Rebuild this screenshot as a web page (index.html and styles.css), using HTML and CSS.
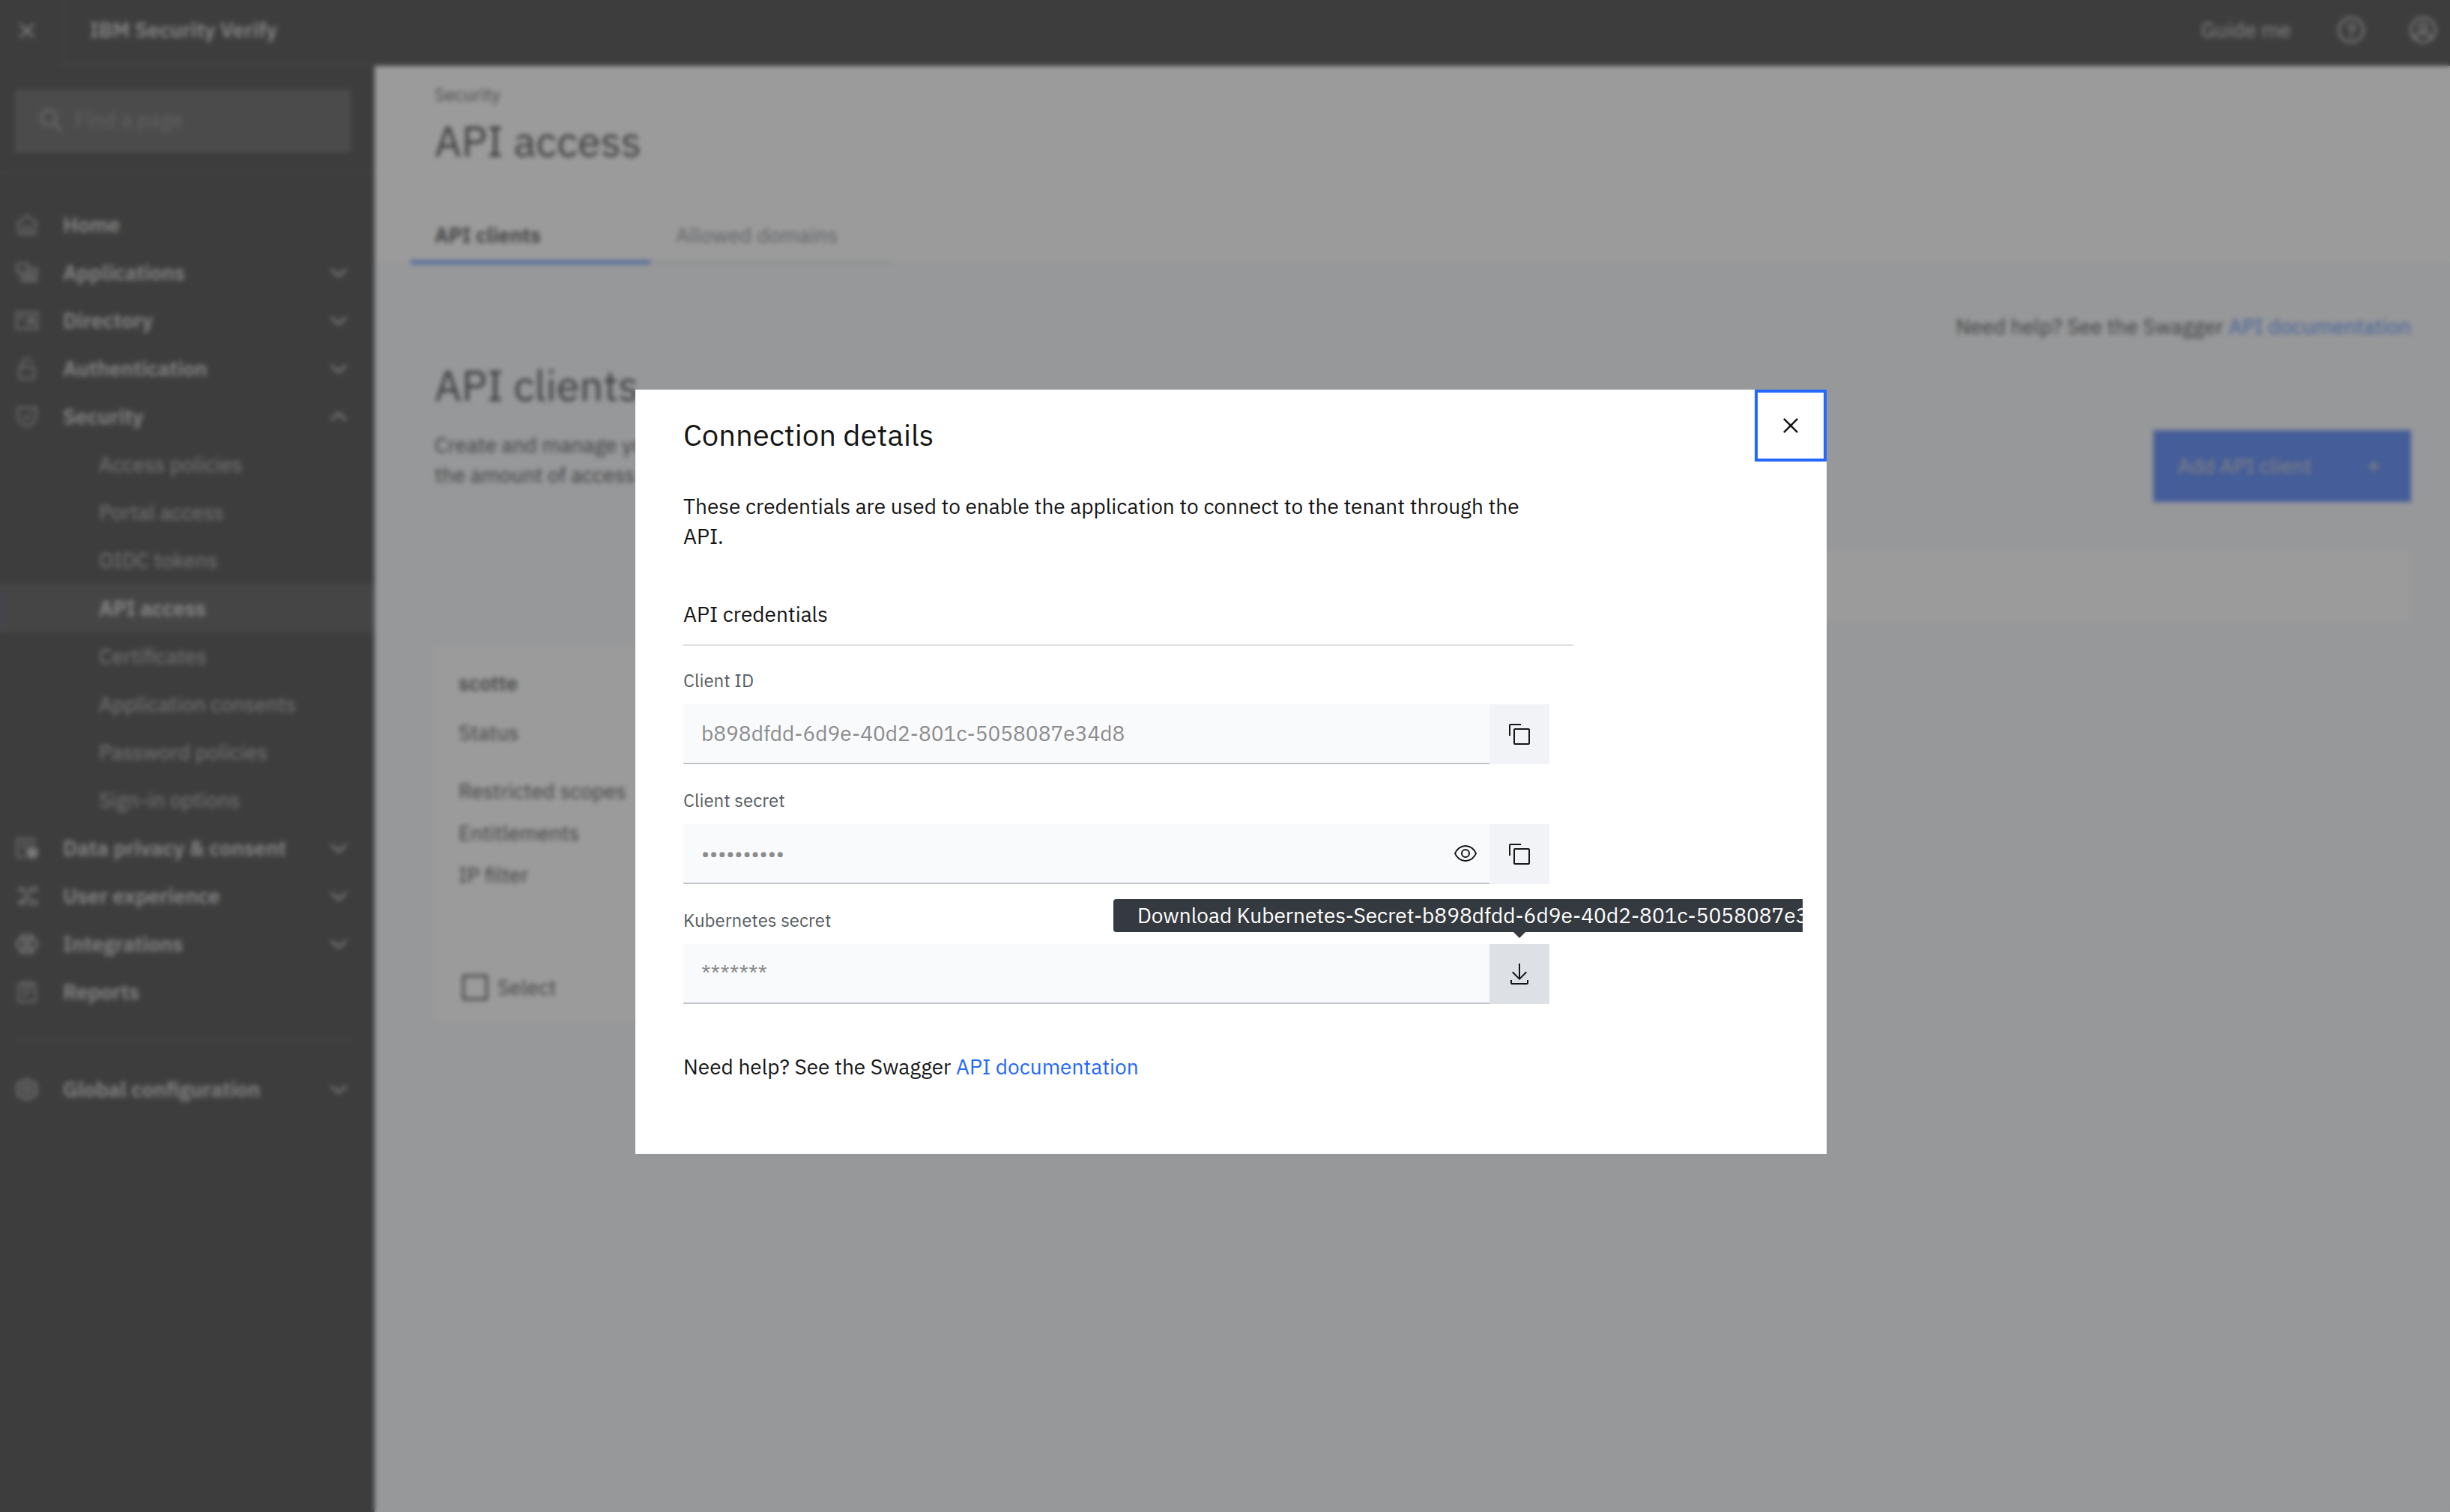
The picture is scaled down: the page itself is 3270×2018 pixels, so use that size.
FILE: index.html
```html
<!DOCTYPE html>
<html lang="en">
<head>
<meta charset="utf-8">
<meta name="viewport" content="width=device-width, initial-scale=1">
<title>API access - IBM Security Verify</title>
<link rel="stylesheet" href="styles.css">
</head>
<body>
<svg class="sprite" aria-hidden="true">
  <symbol id="close" viewBox="0 0 32 32"><path fill="currentColor" d="M17.414 16 24 9.414 22.586 8 16 14.586 9.414 8 8 9.414 14.586 16 8 22.586 9.414 24 16 17.414 22.586 24 24 22.586z"/></symbol>
  <symbol id="chevron" viewBox="0 0 32 32"><path fill="none" stroke="currentColor" stroke-width="2.500" d="M6 11.500 16 20.500 26 11.500"/></symbol>
  <symbol id="copy" viewBox="0 0 32 32"><path fill="currentColor" d="M28 10v18H10V10h18m0-2H10a2 2 0 0 0-2 2v18a2 2 0 0 0 2 2h18a2 2 0 0 0 2-2V10a2 2 0 0 0-2-2zM4 18H2V4a2 2 0 0 1 2-2h14v2H4z"/></symbol>
</svg>

<div class="shell">
  <header class="topbar">
    <button class="topbar-menu" aria-label="Close menu"><svg class="icon icon-large"><use href="#close"/></svg></button>
    <div class="topbar-main">
      <a class="brand" href="#">IBM <b>Security Verify</b></a>
      <nav class="topbar-actions" aria-label="Account">
        <a class="guide" href="#">Guide me</a>
        <button class="icon-button" aria-label="Help"><svg class="icon icon-large" viewBox="0 0 32 32" fill="none" stroke="currentColor" stroke-width="2"><circle cx="16" cy="16" r="13"/><path d="M12.500 13.500v-.5a2.500 2.500 0 0 1 2.500-2.500h2a3 3 0 0 1 0 6h-1v3"/><circle cx="16" cy="22.500" r=".6"/></svg></button>
        <button class="icon-button" aria-label="Profile"><svg class="icon icon-large" viewBox="0 0 32 32" fill="none" stroke="currentColor" stroke-width="2"><circle cx="16" cy="16" r="13"/><circle cx="16" cy="13" r="4"/><path d="M8 26v-2a4 4 0 0 1 4-4h8a4 4 0 0 1 4 4v2"/></svg></button>
      </nav>
    </div>
  </header>

  <aside class="sidebar">
    <div class="search">
      <svg class="icon" viewBox="0 0 32 32" fill="none" stroke="currentColor" stroke-width="2.500"><circle cx="13" cy="13" r="10"/><path d="m20 20 10 10"/></svg>
      <input type="search" aria-label="Find a page" placeholder="Find a page">
    </div>
    <nav class="nav" aria-label="Main">
      <a class="nav-item" href="#"><svg class="icon" viewBox="0 0 32 32" fill="none" stroke="currentColor" stroke-width="2"><path d="M2 15 16 4l14 11M5 13v15h22V13M12 28v-9h8v9"/></svg><span>Home</span></a>
      <button class="nav-item"><svg class="icon" viewBox="0 0 32 32" fill="none" stroke="currentColor" stroke-width="2"><path d="M3 4h14v12H3zM9 16v11h20V10H17M17 16h12M12 20h14M12 24h14"/></svg><span>Applications</span><svg class="chevron"><use href="#chevron"/></svg></button>
      <button class="nav-item"><svg class="icon" viewBox="0 0 32 32" fill="none" stroke="currentColor" stroke-width="2"><path d="M2 5h28v22H2zM6 10h7M6 14h4"/><circle cx="21" cy="13" r="3"/><path d="M16 23v-2a3 3 0 0 1 3-3h4a3 3 0 0 1 3 3v2"/></svg><span>Directory</span><svg class="chevron"><use href="#chevron"/></svg></button>
      <button class="nav-item"><svg class="icon" viewBox="0 0 32 32" fill="none" stroke="currentColor" stroke-width="2"><rect x="6" y="14" width="20" height="15" rx="1"/><path d="M10 14V9a6 6 0 0 1 12-1"/></svg><span>Authentication</span><svg class="chevron"><use href="#chevron"/></svg></button>
      <button class="nav-item" aria-expanded="true"><svg class="icon" viewBox="0 0 32 32" fill="none" stroke="currentColor" stroke-width="2"><path d="M4 4h24v12c0 6-4 9-12 13C8 25 4 22 4 16zM11 15l4 4 7-7"/></svg><span>Security</span><svg class="chevron chevron-up"><use href="#chevron"/></svg></button>
      <a class="nav-sub" href="#">Access policies</a>
      <a class="nav-sub" href="#">Portal access</a>
      <a class="nav-sub" href="#">OIDC tokens</a>
      <a class="nav-sub nav-sub-current" href="#" aria-current="page">API access</a>
      <a class="nav-sub" href="#">Certificates</a>
      <a class="nav-sub" href="#">Application consents</a>
      <a class="nav-sub" href="#">Password policies</a>
      <a class="nav-sub" href="#">Sign-in options</a>
      <button class="nav-item"><svg class="icon" viewBox="0 0 32 32" fill="none" stroke="currentColor" stroke-width="2"><path d="M25 12V4H3v24h11M8 10h12M8 15h6"/><circle cx="23" cy="22" r="7" fill="currentColor"/></svg><span>Data privacy &amp; consent</span><svg class="chevron"><use href="#chevron"/></svg></button>
      <button class="nav-item"><svg class="icon" viewBox="0 0 32 32" fill="none" stroke="currentColor" stroke-width="2"><path d="M3 7h8M11 23 21 9M3 24h8"/><circle cx="10" cy="7" r="2"/><circle cx="10" cy="24" r="3"/><path d="M20 5h9v4h-9zM20 22h9v5h-9zM11 9l10 14"/></svg><span>User experience</span><svg class="chevron"><use href="#chevron"/></svg></button>
      <button class="nav-item"><svg class="icon" viewBox="0 0 32 32" fill="none" stroke="currentColor" stroke-width="3"><path d="M9 5h14l7 11-7 11H9L2 16z"/><circle cx="16" cy="16" r="4"/><path d="M9 6l5 7M23 6l-5 7M9 26l5-7M23 26l-5-7"/></svg><span>Integrations</span><svg class="chevron"><use href="#chevron"/></svg></button>
      <a class="nav-item" href="#"><svg class="icon" viewBox="0 0 32 32" fill="none" stroke="currentColor" stroke-width="2"><path d="M11 5H5v24h22V5h-6M11 3h10v6H11zM10 15h12M10 20h7"/></svg><span>Reports</span></a>
    </nav>
    <nav class="nav nav-global" aria-label="Configuration">
      <button class="nav-item"><svg class="icon" viewBox="0 0 32 32" fill="none" stroke="currentColor" stroke-width="3"><path d="M16 3 28 9v14l-12 6-12-6V9z"/><circle cx="16" cy="16" r="5"/></svg><span>Global configuration</span><svg class="chevron"><use href="#chevron"/></svg></button>
    </nav>
  </aside>

  <main class="main">
    <div class="page-head">
      <div class="breadcrumb">Security</div>
      <h1 class="heading">API access</h1>
      <div class="tabs" role="tablist">
        <button class="tab tab-current" role="tab" aria-selected="true">API clients</button>
        <button class="tab" role="tab" aria-selected="false">Allowed domains</button>
      </div>
    </div>
    <div class="page-body">
      <p class="help">Need help? See the Swagger <a class="link" href="#">API documentation</a></p>
      <h2 class="heading section-heading">API clients</h2>
      <div class="intro">
        <p class="intro-text">Create and manage your API clients, including<br>the amount of access each client has.</p>
        <button class="add">Add API client<svg class="icon" viewBox="0 0 32 32" fill="none" stroke="currentColor" stroke-width="2.500"><path d="M16 8v16M8 16h16"/></svg></button>
      </div>
      <div class="toolbar"></div>
      <article class="card">
        <div class="card-body">
          <h3 class="card-title">scotte</h3>
          <p class="card-status">Status</p>
          <ul class="card-list">
            <li>Restricted scopes</li>
            <li>Entitlements</li>
            <li>IP filter</li>
          </ul>
        </div>
        <label class="card-select"><input class="checkbox" type="checkbox">Select</label>
      </article>
    </div>
  </main>
</div>

<div class="overlay">
  <section class="modal" role="dialog" aria-modal="true" aria-labelledby="modal-title">
    <button class="modal-close" aria-label="Close"><svg class="icon icon-large"><use href="#close"/></svg></button>
    <div class="modal-content">
      <h2 class="modal-title" id="modal-title">Connection details</h2>
      <p class="modal-text">These credentials are used to enable the application to connect to the tenant through the API.</p>
      <h3 class="modal-subtitle">API credentials</h3>
      <div class="field">
        <label class="field-label" for="client-id">Client ID</label>
        <div class="field-row">
          <div class="field-box"><input class="field-input" id="client-id" type="text" value="b898dfdd-6d9e-40d2-801c-5058087e34d8" readonly></div>
          <button class="field-action" aria-label="Copy client ID"><svg class="icon"><use href="#copy"/></svg></button>
        </div>
      </div>
      <div class="field">
        <label class="field-label" for="client-secret">Client secret</label>
        <div class="field-row">
          <div class="field-box"><input class="field-input" id="client-secret" type="password" value="0123456789" readonly>
            <button class="reveal" aria-label="Show client secret"><svg class="icon" viewBox="0 0 32 32" fill="currentColor"><path d="M30.940 15.660A16.690 16.690 0 0 0 16 5 16.690 16.690 0 0 0 1.060 15.660a1 1 0 0 0 0 .68A16.690 16.690 0 0 0 16 27a16.690 16.690 0 0 0 14.940-10.660 1 1 0 0 0 0-.68zM16 25c-5.300 0-10.900-3.930-12.930-9C5.100 10.930 10.700 7 16 7s10.900 3.930 12.930 9C26.900 21.070 21.300 25 16 25zM16 10a6 6 0 1 0 6 6 6 6 0 0 0-6-6zm0 10a4 4 0 1 1 4-4 4 4 0 0 1-4 4z"/></svg></button>
          </div>
          <button class="field-action" aria-label="Copy client secret"><svg class="icon"><use href="#copy"/></svg></button>
        </div>
      </div>
      <div class="field">
        <label class="field-label" for="kube-secret">Kubernetes secret</label>
        <div class="field-row">
          <div class="field-box"><input class="field-input" id="kube-secret" type="text" value="*******" readonly></div>
          <button class="field-action field-action-active" aria-describedby="download-tip" aria-label="Download"><svg class="icon" viewBox="0 0 32 32" fill="currentColor"><path d="M26 24v4H6v-4H4v4a2 2 0 0 0 2 2h20a2 2 0 0 0 2-2v-4zM26 14l-1.410-1.410L17 20.170V2h-2v18.170l-7.590-7.580L6 14l10 10z"/></svg><span class="tooltip" id="download-tip" role="tooltip">Download Kubernetes-Secret-b898dfdd-6d9e-40d2-801c-5058087e34d8.yaml</span></button>
        </div>
      </div>
      <p class="modal-help">Need help? See the Swagger <a class="link" href="#">API documentation</a></p>
    </div>
  </section>
</div>
</body>
</html>
```
FILE: styles.css
```css
* {
  box-sizing: border-box;
}

body {
  margin: 0;
  font-family: "IBM Plex Sans", "Noto Sans", sans-serif;
  font-size: 28px;
  line-height: 40px;
  color: #161616;
  background: #f4f7fb;
}

h1, h2, h3, p, ul {
  margin: 0;
  padding: 0;
  font-weight: 400;
}

ul {
  list-style: none;
}

button, input {
  margin: 0;
  padding: 0;
  border: 0;
  border-radius: 0;
  background: none;
  font: inherit;
  color: inherit;
}

a {
  color: inherit;
  text-decoration: none;
}

.link {
  color: #2468ff;
}

.sprite {
  position: absolute;
  width: 0;
  height: 0;
}

.icon {
  flex: none;
  display: block;
  width: 32px;
  height: 32px;
}

.icon-large {
  width: 40px;
  height: 40px;
}

/* Shell */

.shell {
  display: grid;
  grid-template: 88px 1fr / 500px 1fr;
  min-height: 100vh;
}

.topbar {
  grid-column: 1 / -1;
  display: flex;
  background: #161616;
  color: #c6c6c6;
}

.topbar-menu {
  width: 84px;
  padding: 0 0 6px 16px;
}

.topbar-main {
  flex: 1;
  display: flex;
  align-items: center;
  justify-content: space-between;
  padding: 0 16px 6px 34px;
  border-left: 2px solid #262626;
  border-bottom: 2px solid #262626;
}

.brand,
.brand b {
  font-weight: 600;
}

.topbar-actions {
  display: flex;
  align-items: center;
}

.guide {
  margin-right: 60px;
}

.icon-button + .icon-button {
  margin-left: 56px;
}

/* Sidebar */

.sidebar {
  padding-top: 32px;
  background: #161616;
  color: #c6c6c6;
}

.search {
  display: flex;
  align-items: center;
  gap: 16px;
  height: 82px;
  margin: 0 32px 28px 20px;
  padding-left: 32px;
  background: #393939;
  border-bottom: 2px solid #525252;
  color: #8d8d8d;
}

.search input {
  flex: 1;
  min-width: 0;
}

.search input::placeholder {
  color: #6f6f6f;
  opacity: 1;
}

.nav {
  display: flex;
  flex-direction: column;
  padding-top: 36px;
  border-top: 2px solid #262626;
}

.nav-item {
  display: flex;
  align-items: center;
  gap: 32px;
  height: 64px;
  padding: 0 32px 0 20px;
  font-weight: 600;
  text-align: left;
}

.nav-item span {
  flex: 1;
}

.nav-item .icon {
  color: #a8a8a8;
}

.chevron {
  width: 32px;
  height: 32px;
}

.chevron-up {
  transform: rotate(180deg);
}

.nav-sub {
  height: 64px;
  padding-left: 132px;
  line-height: 64px;
  color: #a8a8a8;
}

.nav-sub-current {
  background: #2a2a2a;
  box-shadow: inset 2px 0 #262c44;
  font-weight: 600;
  color: #d0d0d0;
}

.nav-global {
  margin: 32px 0 0;
  padding-top: 34px;
  border-top: 0;
  background: linear-gradient(#262626, #262626) 20px 0 / 448px 2px no-repeat;
}

/* Page */

.page-head {
  height: 262px;
  padding: 22px 52px 0 80px;
  background: #fff;
}

.breadcrumb {
  font-size: 24px;
  line-height: 32px;
  color: #393939;
}

.heading {
  margin-top: 14px;
  font-size: 56px;
  line-height: 64px;
}

.tabs {
  display: flex;
  gap: 2px;
  margin: 54px 0 0 -32px;
}

.tab {
  width: 320px;
  height: 78px;
  padding: 6px 32px 0;
  border-bottom: 4px solid #dde1e6;
  text-align: left;
  color: #697077;
}

.tab-current {
  border-color: #0f62fe;
  font-weight: 600;
  color: #161616;
}

.page-body {
  padding: 66px 52px 0 80px;
}

.help {
  text-align: right;
}

.section-heading {
  margin-top: 26px;
}

.intro {
  display: flex;
  align-items: flex-start;
  justify-content: space-between;
  margin-top: 28px;
}

.add {
  display: flex;
  align-items: center;
  justify-content: space-between;
  width: 344px;
  height: 96px;
  padding: 0 34px 0 32px;
  background: #2864f7;
  color: #c6c6c6;
}

.toolbar {
  height: 96px;
  margin: 64px 0 0 480px;
  background: #fff;
}

.card {
  width: 960px;
  margin-top: 32px;
  background: #fff;
}

.card-body {
  min-height: 408px;
  padding: 30px 32px 0;
}

.card-title {
  font-size: 28px;
  font-weight: 500;
}

.card-status {
  margin: 26px 0 38px;
}

.card-list {
  display: grid;
  gap: 16px;
}

.card-select {
  display: flex;
  align-items: center;
  gap: 13px;
  height: 94px;
  padding-left: 37px;
  border-top: 2px solid #f4f7fb;
}

.checkbox {
  appearance: none;
  width: 34px;
  height: 34px;
  border: 3px solid #161616;
  border-radius: 2px;
}

/* Modal */

.overlay {
  position: fixed;
  inset: 0;
  display: flex;
  align-items: center;
  justify-content: center;
  padding: 42px 0 0 16px;
  background: rgba(88, 88, 88, 0.6);
  backdrop-filter: blur(3px);
}

.modal {
  position: relative;
  width: 1590px;
  background: #fff;
}

.modal-close {
  position: absolute;
  top: 0;
  right: 0;
  z-index: 1;
  display: grid;
  place-items: center;
  width: 96px;
  height: 96px;
  border: 4px solid #2468ff;
}

.modal-content {
  margin: 0 32px 0 64px;
  padding: 32px 0 96px;
  overflow: clip;
}

.modal-title {
  font-size: 40px;
  line-height: 56px;
}

.modal-text {
  max-width: 1160px;
  margin-top: 48px;
}

.modal-subtitle {
  max-width: 1188px;
  margin: 64px 0 30px;
  padding-bottom: 20px;
  border-bottom: 2px solid #dde1e6;
  font-size: 28px;
}

.field + .field {
  margin-top: 32px;
}

.field-label {
  display: block;
  margin-bottom: 16px;
  font-size: 24px;
  line-height: 32px;
  color: #565c61;
}

.field-row {
  display: flex;
  max-width: 1156px;
}

.field-box {
  flex: 1;
  display: flex;
  align-items: center;
  height: 80px;
  padding: 0 16px 0 24px;
  background: #f9fafc;
  border-bottom: 2px solid #c3c4c9;
}

.field-input {
  flex: 1;
  min-width: 0;
  height: 40px;
  color: #8c8c8c;
}

.field-action {
  position: relative;
  display: grid;
  place-items: center;
  width: 80px;
  height: 80px;
  background: #f2f3f7;
}

.field-action-active {
  background: #dde1e6;
}

.tooltip {
  position: absolute;
  left: 50%;
  bottom: 96px;
  width: 1084px;
  height: 44px;
  margin-left: -542px;
  padding-left: 32px;
  border-radius: 4px;
  background: #343a3f;
  color: #fff;
  line-height: 44px;
  text-align: left;
  white-space: nowrap;
}

.tooltip::after {
  content: "";
  position: absolute;
  top: 100%;
  left: 50%;
  margin-left: -8px;
  border: 8px solid transparent;
  border-top-color: #343a3f;
  border-bottom: 0;
}

.modal-help {
  margin-top: 64px;
}
```
